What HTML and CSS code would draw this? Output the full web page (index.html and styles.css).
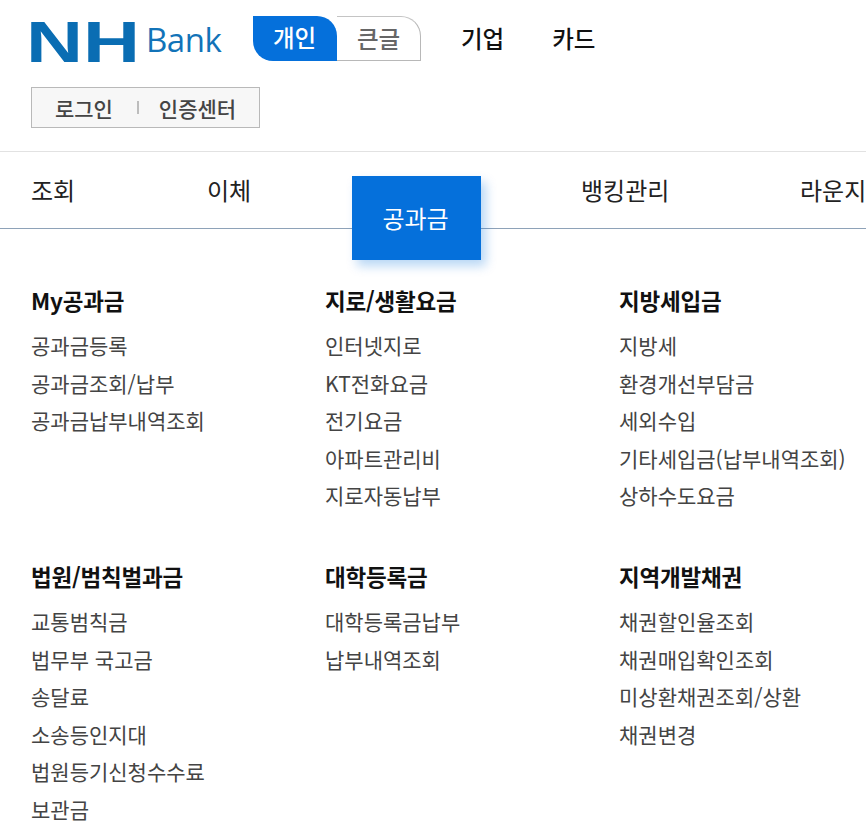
FILE: index.html
```html
<!DOCTYPE html>
<html lang="ko">
<head>
<meta charset="utf-8">
<title>NH Bank</title>
<link rel="stylesheet" href="styles.css">
</head>
<body>
<header class="top">
  <div class="brand-row">
    <div class="logo">
      <svg class="logo-nh" viewBox="0 0 114 46" width="114" height="46" role="img" aria-label="NH">
        <text x="0" y="44" textLength="114" lengthAdjust="spacingAndGlyphs" class="logo-nh-text">NH</text>
      </svg>
      <span class="logo-bank">Bank</span>
    </div>
    <div class="toggle">
      <span class="toggle-on">개인</span>
      <span class="toggle-off">큰글</span>
    </div>
    <a class="top-link first">기업</a>
    <a class="top-link">카드</a>
  </div>
  <div class="auth">
    <span>로그인</span>
    <i class="auth-sep"></i>
    <span>인증센터</span>
  </div>
</header>
<nav class="gnb">
  <a class="gnb-item w-a">조회</a>
  <a class="gnb-item w-b">이체</a>
  <a class="gnb-item gnb-active">공과금</a>
  <a class="gnb-item w-c">뱅킹관리</a>
  <a class="gnb-item">라운지</a>
</nav>
<main class="menu">
  <section class="group">
    <h2>My공과금</h2>
    <ul><li>공과금등록</li><li>공과금조회/납부</li><li>공과금납부내역조회</li></ul>
  </section>
  <section class="group">
    <h2>지로/생활요금</h2>
    <ul><li>인터넷지로</li><li>KT전화요금</li><li>전기요금</li><li>아파트관리비</li><li>지로자동납부</li></ul>
  </section>
  <section class="group">
    <h2>지방세입금</h2>
    <ul><li>지방세</li><li>환경개선부담금</li><li>세외수입</li><li>기타세입금(납부내역조회)</li><li>상하수도요금</li></ul>
  </section>
  <section class="group">
    <h2>법원/범칙벌과금</h2>
    <ul><li>교통범칙금</li><li>법무부 국고금</li><li>송달료</li><li>소송등인지대</li><li>법원등기신청수수료</li><li>보관금</li></ul>
  </section>
  <section class="group">
    <h2>대학등록금</h2>
    <ul><li>대학등록금납부</li><li>납부내역조회</li></ul>
  </section>
  <section class="group">
    <h2>지역개발채권</h2>
    <ul><li>채권할인율조회</li><li>채권매입확인조회</li><li>미상환채권조회/상환</li><li>채권변경</li></ul>
  </section>
</main>
</body>
</html>
```
FILE: styles.css
```css
* { box-sizing: border-box; }
html, body { margin: 0; padding: 0; background: #fff; overflow: hidden; }
body {
  width: 866px;
  height: 838px;
  font-family: "Noto Sans CJK KR", "Noto Sans", sans-serif;
  color: #111;
}
.top { height: 151px; padding: 16px 0 0 31px; }
.brand-row { display: flex; align-items: center; height: 45px; }
.logo { display: flex; align-items: center; width: 222px; height: 45px; }
.logo-nh { display: block; flex: none; margin: 4px 0 0 -5px; overflow: visible; }
.logo-nh-text {
  font-family: "Liberation Sans", sans-serif;
  font-weight: 700;
  font-size: 58px;
  fill: #0a6db3;
}
.logo-bank {
  margin: 3px 0 0 6px;
  font-family: "Open Sans", sans-serif;
  font-size: 33px;
  line-height: 40px;
  color: #1273b8;
  letter-spacing: -0.5px;
}
.toggle {
  display: flex;
  width: 168px;
  height: 45px;
  font-size: 23.5px;
  line-height: 43px;
  text-align: center;
}
.toggle-on {
  width: 84px;
  background: #0570db;
  color: #fff;
  font-weight: 500;
  border-radius: 0 20px 0 20px;
  padding-right: 1px;
}
.toggle-off {
  flex: 1;
  color: #666;
  border-top: 1px solid #c4c4c4;
  border-right: 1px solid #b8b8b8;
  border-bottom: 1px solid #b8b8b8;
  border-top-right-radius: 20px;
  font-weight: 500;
  line-height: 42px;
}
.top-link { font-size: 23.5px; font-weight: 500; color: #111; line-height: 47px; margin-left: 48px; }
.top-link.first { margin-left: 40px; }
.auth {
  display: flex;
  align-items: center;
  justify-content: center;
  width: 229px;
  height: 41px;
  margin-top: 26px;
  background: #f7f7f7;
  border: 1px solid #b9b9b9;
  font-size: 21px;
  font-weight: 500;
  color: #444;
  gap: 22px;
}
.auth-sep { width: 2px; height: 13px; margin: 0 -2px 0 2px; background: #bdbdbd; }
.gnb {
  position: relative;
  display: flex;
  height: 78px;
  padding-left: 31px;
  border-top: 1px solid #e2e2e2;
  border-bottom: 1px solid #8ea2b8;
  white-space: nowrap;
}
.gnb-item { font-size: 24px; line-height: 76px; color: #222; flex: none; }
.w-a { width: 176px; }
.w-b { width: 145px; }
.w-c { width: 219px; }
.gnb-active {
  position: relative;
  z-index: 1;
  width: 129px;
  height: 84px;
  margin-top: 24px;
  padding-right: 2px;
  background: #0570db;
  color: #fff;
  text-align: center;
  line-height: 84px;
  margin-right: 100px;
  box-shadow: 5px 6px 10px rgba(5, 112, 219, 0.28);
}
.menu {
  display: grid;
  grid-template-columns: repeat(3, 294px);
  grid-template-rows: 276px auto;
  padding: 52px 0 0 31px;
  white-space: nowrap;
}
.group h2 {
  margin: 0 0 7px;
  font-size: 22.5px;
  font-weight: 700;
  line-height: 38px;
  padding-bottom: 1px;
  color: #111;
  letter-spacing: -0.2px;
}
.group ul { margin: 0; padding: 0; list-style: none; }
.group li {
  font-size: 21px;
  line-height: 37.5px;
  color: #444;
}
```
